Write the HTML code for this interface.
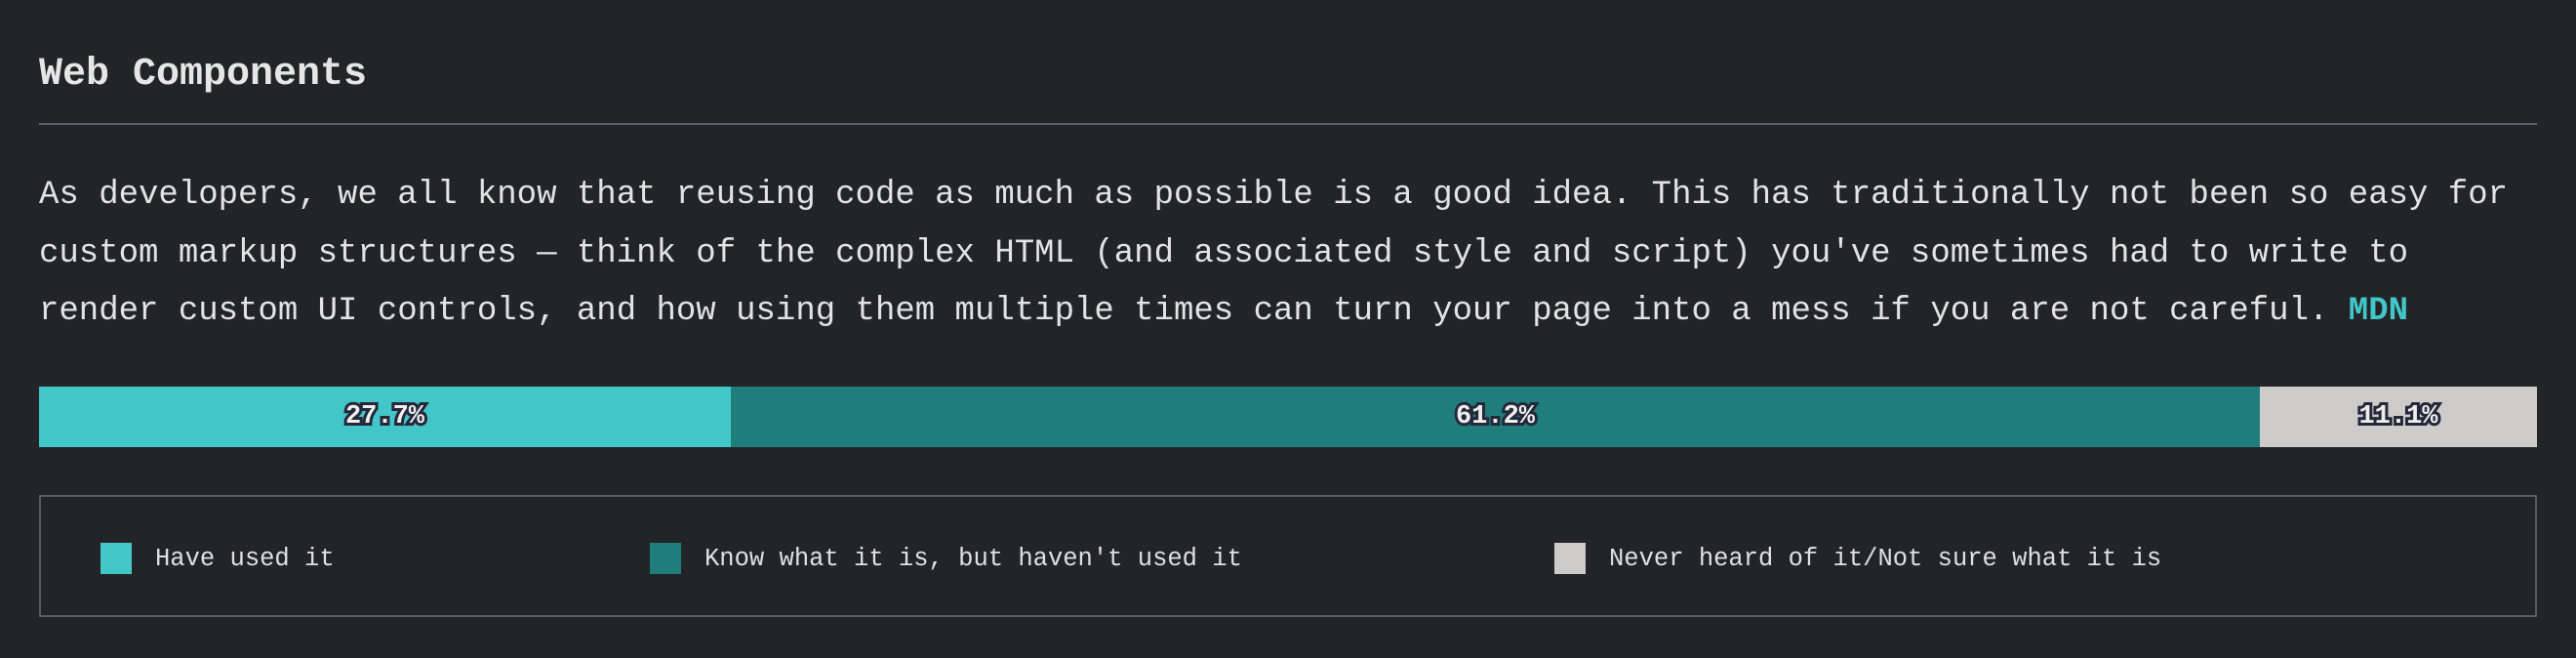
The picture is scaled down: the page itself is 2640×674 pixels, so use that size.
<!DOCTYPE html>
<html><head><meta charset="utf-8"><style>
html,body{margin:0;padding:0;background:#232428;width:2640px;height:674px;overflow:hidden}
body{font-family:"Liberation Mono",monospace;color:#e3e3e3}
h2{position:absolute;left:40px;top:47px;margin:0;font-size:40px;line-height:60px;font-weight:bold;color:#e6e6e6}
.hr{position:absolute;left:40px;top:126px;width:2560px;height:2px;background:#5f5f66}
p{position:absolute;left:40px;top:171px;margin:0;font-size:34px;line-height:59.5px;white-space:nowrap;color:#e3e3e3}
p b{color:#42c6c8}
.bar{position:absolute;left:40px;top:396px;width:2560px;height:62px;display:flex}
.bar div{height:100%;display:flex;align-items:center;justify-content:center;font-weight:bold;font-size:27px;color:#eee;-webkit-text-stroke:6px #26283a;paint-order:stroke fill}
.leg{position:absolute;left:40px;top:507px;width:2556px;height:121px;border:2px solid #5a5a62}
.it{position:absolute;top:47px;display:flex;align-items:center;font-size:25.5px;color:#e0e0e0}
.sq{width:32px;height:32px;margin-right:24px}
</style></head><body>
<h2>Web Components</h2>
<div class="hr"></div>
<p>As developers, we all know that reusing code as much as possible is a good idea. This has traditionally not been so easy for<br>custom markup structures — think of the complex HTML (and associated style and script) you've sometimes had to write to<br>render custom UI controls, and how using them multiple times can turn your page into a mess if you are not careful. <b>MDN</b></p>
<div class="bar">
<div style="width:709px;background:#42c6c8">27.7%</div>
<div style="width:1567px;background:#1f7e7c">61.2%</div>
<div style="flex:1;background:#cdcccb">11.1%</div>
</div>
<div class="leg">
<div class="it" style="left:61px"><span class="sq" style="background:#42c6c8"></span>Have used it</div>
<div class="it" style="left:624px"><span class="sq" style="background:#1f7e7c"></span>Know what it is, but haven't used it</div>
<div class="it" style="left:1551px"><span class="sq" style="background:#cdcccb"></span>Never heard of it/Not sure what it is</div>
</div>
</body></html>
